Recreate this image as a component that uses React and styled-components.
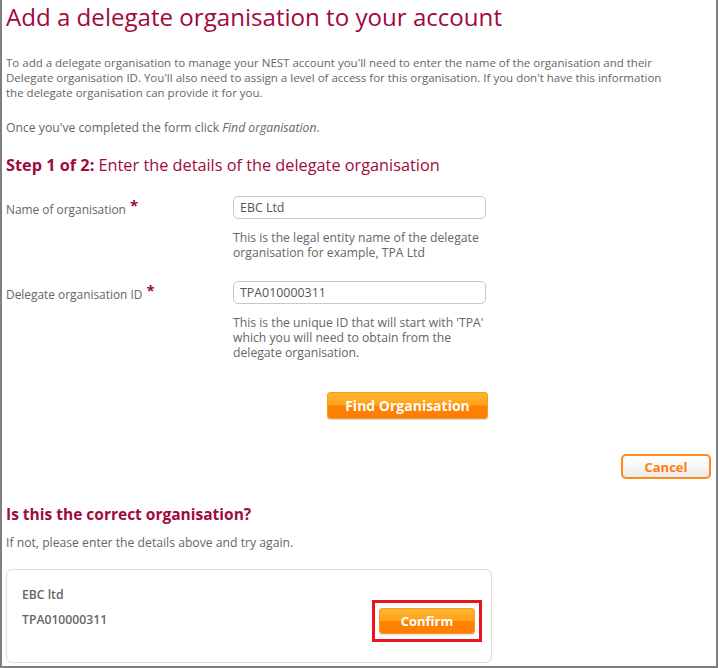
import React from "react";
import styled, { createGlobalStyle } from "styled-components";

const GlobalStyle = createGlobalStyle`
  html, body {
    margin: 0;
    padding: 0;
    background: #ffffff;
  }
  body {
    font-family: "Open Sans", "Noto Sans", Arial, sans-serif;
  }
`;

const Page = styled.div`
  box-sizing: border-box;
  width: 718px;
  height: 668px;
  border-left: 2px solid #7f7f7f;
  border-right: 2px solid #7f7f7f;
  border-bottom: 2px solid #7f7f7f;
  padding: 0 0 0 4px;
  color: #666666;
  font-size: 12.2px;
  overflow: hidden;
`;

const Title = styled.h1`
  margin: 0;
  padding-top: 1px;
  font-size: 24.1px;
  font-weight: 400;
  line-height: 32px;
  color: #a00a3c;
`;

const Para = styled.p`
  margin: ${(p) => p.margin || "0"};
  font-size: ${(p) => p.size || "12.2px"};
  line-height: 15px;
  white-space: nowrap;
`;

const StepHeading = styled.h2`
  margin: 19px 0 0;
  font-size: 16.3px;
  font-weight: 400;
  line-height: 22px;
  color: #a00a3c;

  b {
    font-weight: 700;
  }
`;

const Form = styled.div`
  display: flex;
  flex-direction: column;
  margin-top: 20px;
`;

const FieldRow = styled.div`
  display: grid;
  grid-template-columns: 227px 253px;
  margin-bottom: ${(p) => p.gap || "0"};
`;

const Label = styled.div`
  padding-top: 6px;
  font-size: 11.9px;
  line-height: 15px;
`;

const Star = styled.span`
  color: #a00a3c;
  font-size: 15px;
  font-weight: 700;
  line-height: 0;
  margin-left: 4px;
  position: relative;
  top: -3px;
`;

const Input = styled.div`
  box-sizing: border-box;
  height: 23px;
  border: 1px solid #c8c8c8;
  border-radius: 5px;
  padding: 3px 6px;
  font-size: 12.4px;
  line-height: 15px;
  color: #555555;
`;

const Help = styled.div`
  margin-top: 11px;
  line-height: 15px;
  white-space: nowrap;
`;

const OrangeButton = styled.button`
  box-sizing: border-box;
  height: ${(p) => p.h || "27px"};
  width: ${(p) => p.w};
  border: 1px solid #f59a2e;
  border-radius: 3px;
  background: linear-gradient(180deg, #ffb52f 0%, #ffa21c 48%, #ff8200 52%, #ff7d00 100%);
  color: #ffffff;
  font-family: "Open Sans", Arial, sans-serif;
  font-weight: 700;
  font-size: ${(p) => p.size || "14px"};
  padding: 0;
  box-shadow: 0 1px 1px rgba(0, 0, 0, 0.15);
`;

const FindRow = styled.div`
  display: flex;
  justify-content: flex-end;
  width: 482px;
  margin-top: 32px;
`;

const CancelRow = styled.div`
  display: flex;
  justify-content: flex-end;
  padding-right: 5px;
  margin-top: 35px;
`;

const CancelButton = styled.button`
  box-sizing: border-box;
  width: 90px;
  height: 25px;
  border: 2px solid #ff8a1a;
  border-radius: 5px;
  background: linear-gradient(180deg, #ffffff 0%, #f7f7f7 50%, #e9e9e9 100%);
  color: #ff7f0e;
  font-family: "Open Sans", Arial, sans-serif;
  font-weight: 700;
  font-size: 13px;
  padding: 0;
`;

const SubHeading = styled.h3`
  margin: 24px 0 0;
  font-size: 15.5px;
  font-weight: 700;
  line-height: 22px;
  color: #a00a3c;
`;

const Card = styled.div`
  box-sizing: border-box;
  width: 486px;
  height: 94px;
  margin-top: 19px;
  border: 1px solid #dcdcdc;
  border-radius: 6px;
  display: flex;
  justify-content: space-between;
  padding: 17px 9px 0 15px;
`;

const OrgInfo = styled.div`
  display: flex;
  flex-direction: column;
  gap: 10px;
  font-weight: 600;
  color: #666666;
  line-height: 15px;
`;

const Highlight = styled.div`
  align-self: flex-start;
  margin-top: 13px;
  border: 3px solid #e8141e;
  padding: 5px 4px;
  display: flex;
`;

export default function App() {
  return (
    <>
      <GlobalStyle />
      <Page>
        <Title>Add a delegate organisation to your account</Title>
        <Para margin="22px 0 0" size="11.5px">
          To add a delegate organisation to manage your NEST account you'll need to enter the name of the organisation and their
          <br />
          Delegate organisation ID. You'll also need to assign a level of access for this organisation. If you don't have this information
          <br />
          the delegate organisation can provide it for you.
        </Para>
        <Para margin="20px 0 0" size="12.2px">
          Once you've completed the form click <i>Find organisation</i>.
        </Para>
        <StepHeading>
          <b>Step 1 of 2:</b> Enter the details of the delegate organisation
        </StepHeading>
        <Form>
          <FieldRow gap="21px">
            <Label>
              Name of organisation<Star>*</Star>
            </Label>
            <div>
              <Input>EBC Ltd</Input>
              <Help>
                This is the legal entity name of the delegate
                <br />
                organisation for example, TPA Ltd
              </Help>
            </div>
          </FieldRow>
          <FieldRow>
            <Label>
              Delegate organisation ID<Star>*</Star>
            </Label>
            <div>
              <Input>TPA010000311</Input>
              <Help>
                This is the unique ID that will start with 'TPA'
                <br />
                which you will need to obtain from the
                <br />
                delegate organisation.
              </Help>
            </div>
          </FieldRow>
          <FindRow>
            <OrangeButton w="161px">Find Organisation</OrangeButton>
          </FindRow>
        </Form>
        <CancelRow>
          <CancelButton>Cancel</CancelButton>
        </CancelRow>
        <SubHeading>Is this the correct organisation?</SubHeading>
        <Para margin="10px 0 0">If not, please enter the details above and try again.</Para>
        <Card>
          <OrgInfo>
            <span>EBC ltd</span>
            <span>TPA010000311</span>
          </OrgInfo>
          <Highlight>
            <OrangeButton w="96px" h="26px" size="13px">
              Confirm
            </OrangeButton>
          </Highlight>
        </Card>
      </Page>
    </>
  );
}
